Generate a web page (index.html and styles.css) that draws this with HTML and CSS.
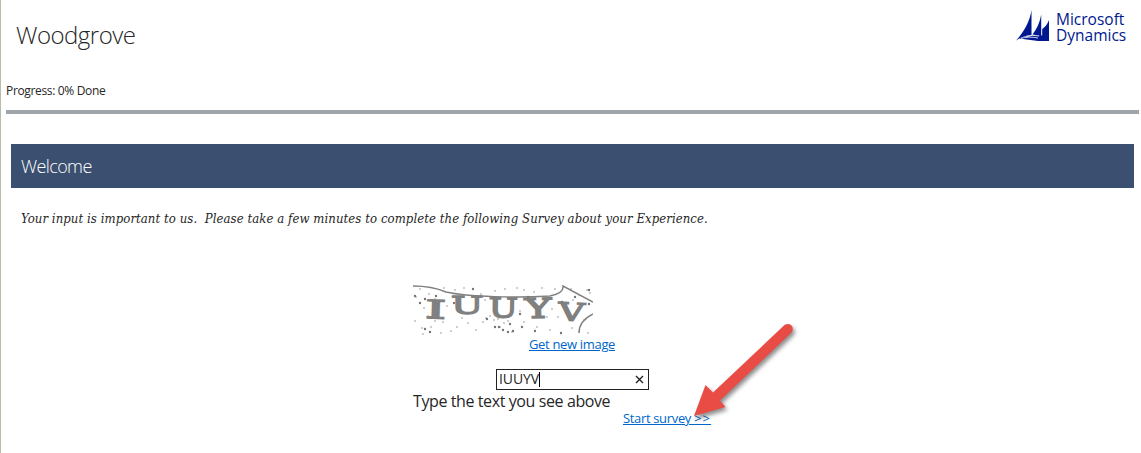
FILE: index.html
```html
<!DOCTYPE html>
<html lang="en">
<head>
<meta charset="utf-8">
<title>Woodgrove Survey</title>
<link rel="stylesheet" href="styles.css">
</head>
<body>
<div class="page">
  <header class="header">
    <h1 class="brand">Woodgrove</h1>
    <div class="logo">
      <svg class="logo-mark" width="34" height="34" viewBox="0 0 34 34">
        <g fill="#00188f">
          <path d="M15.500 1C14 12 8 23 0 31.500Q7 26.500 15.500 26Z"/>
          <path d="M25.200 5.500C24 13 21 20 16.500 25.500L25.200 27Z"/>
          <path d="M33 11C31 16 29 18 26.200 20V31H33Z"/>
          <path d="M3 30Q12 25.500 24 26.500L33 26V32H22L7 30Z"/>
        </g>
        <path d="M5 29.500Q12 27 22 29M10 28Q16 25 23 27" fill="none" stroke="#fff" stroke-width=".8"/>
      </svg>
      <div class="logo-text"><div>Microsoft</div><div>Dynamics</div></div>
    </div>
  </header>
  <div class="progress">Progress: 0% Done</div>
  <div class="progress-bar"></div>
  <main>
    <h2 class="section-title">Welcome</h2>
    <p class="intro">Your input is important to us.&nbsp; Please take a few minutes to complete the following Survey about your Experience.</p>
    <div class="verify">
      <svg class="challenge" width="180" height="50" viewBox="0 0 180 50">
        <g class="challenge-text">
          <text transform="translate(12 33) rotate(2) scale(1.95 .94)">I</text>
          <text transform="translate(38 29) scale(1.42 .9)">U</text>
          <text transform="translate(75.500 32) rotate(1) scale(1.28 1)">U</text>
          <text transform="translate(112 33) rotate(-1) scale(1.48 1)">Y</text>
          <text transform="translate(145 35) rotate(3) scale(1.34 .92)">V</text>
        </g>
        <path class="scratch" d="M0 1Q19 1 33 7C55 12 105 13 137 11Q151 8 150 1L180 17M180 29Q166 36 166 48"/>
        <path class="specks" d="M3 12h0M7 4h0M11 23h0M16 9h0M22 14h0M31 3h0M42 5h0M51 3h0M60 4h0M68 9h0M82 6h0M92 4h0M104 3h0M111 5h0M121 7h0M129 3h0M142 4h0M158 4h0M166 10h0M174 5h0M177 8h0M168 21h0M160 15h0M147 17h0M139 24h0M134 32h0M145 32h0M119 20h0M107 26h0M111 37h0M124 42h0M137 45h0M148 48h0M159 43h0M171 35h0M175 48h0M95 36h0M99 47h0M87 42h0M91 38h0M81 35h0M77 31h0M70 37h0M63 45h0M55 38h0M49 33h0M44 42h0M38 46h0M30 37h0M22 36h0M18 42h0M9 43h0M10 49h0M2 36h0M28 48h0M65 20h0M72 15h0M34 21h0M15 31h0M73 33h0M85 34h0"/>
        <path class="blots" d="M2 11h0M12 14h0M7 18h0M23 11h0M12 44h0M17 47h0M41 18h0M60 4h0M74 34h0M82 42h0M86 42h0M90 45h0M97 39h0M95 47h0M100 46h0M109 42h0M107 29h0M115 12h0M122 46h0M149 17h0M162 12h0M176 19h0M176 5h0M148 48h0"/>
      </svg>
      <a class="link new-image" href="#">Get new image</a>
      <label class="answer"><span class="answer-text">IUUYV</span><span class="caret"></span>
        <svg class="clear" width="9" height="9" viewBox="0 0 9 9"><path d="M1 1l7 7M8 1l-7 7"/></svg>
      </label>
      <div class="hint">Type the text you see above</div>
      <a class="link start" href="#">Start survey <span class="chevrons">&gt;&gt;</span></a>
    </div>
  </main>
  <svg class="pointer" width="120" height="120" viewBox="0 0 120 120">
    <path fill="#e94b45" d="M14 106L25.500 75L33 82.500L104.500 15Q109 12.500 112 16Q114 20 111 23L40 90.500L45.500 97Z"/>
  </svg>
</div>
</body>
</html>
```
FILE: styles.css
```css
* { box-sizing: border-box; }
body { margin: 0; background: #fff; color: #262626; font-family: "Open Sans", "Noto Sans", sans-serif; }
.page { position: relative; height: 453px; overflow: hidden; border-left: 1px solid #b7bda7; white-space: nowrap; }
.header { display: flex; justify-content: space-between; height: 82px; padding: 9px 13px 0 15px; }
.brand { margin: 9px 0 0; font-size: 24px; line-height: 34px; font-weight: 300; letter-spacing: -.5px; }
.logo { display: flex; width: 112px; }
.logo-mark { flex: none; margin-right: 6px; }
.logo-text { padding-top: 2px; color: #00188f; font-size: 15.5px; line-height: 16px; letter-spacing: 0; }
.progress { height: 28px; padding-left: 5px; font-size: 12px; line-height: 18px; letter-spacing: -.34px; }
.progress-bar { height: 4px; margin: 0 2px 0 5px; background: #a0a5aa; }
.section-title { height: 44px; margin: 30px 7px 0 10px; padding-left: 10px; background: #3b5071; color: #fff; font-size: 18px; line-height: 45px; font-weight: 300; letter-spacing: -.6px; }
.intro { height: 40px; margin: 20px 0 0 20px; font: italic 13px/22px "DejaVu Serif Condensed", "DejaVu Serif", serif; letter-spacing: .078px; }
.verify { display: flex; flex-direction: column; align-items: flex-start; width: 310px; margin: 37px 0 0 412px; }
.challenge { display: block; overflow: hidden; }
.challenge-text { font: 27px "DejaVu Serif", serif; fill: #808080; stroke: #808080; stroke-width: 1.5; }
.scratch { fill: none; stroke: #808080; stroke-width: 1.5; }
.specks, .blots { stroke: #909090; stroke-width: 1.6; stroke-linecap: round; }
.blots { stroke: #777; stroke-width: 2.4; }
.link { color: #0066cc; font-size: 13px; line-height: 18px; text-decoration: underline; }
.new-image { margin-left: 116px; letter-spacing: -.33px; }
.answer { display: flex; align-items: center; width: 153px; height: 21px; margin: 16px 0 0 83px; padding: 0 4px 0 2px; border: 1px solid #222; font-size: 14px; line-height: 18px; }
.answer-text { position: relative; top: -1px; letter-spacing: -.1px; }
.caret { width: 1px; height: 15px; background: #000; }
.clear { margin-left: auto; fill: none; stroke: #222; stroke-width: 1.4; }
.hint { height: 19px; font-size: 16px; line-height: 23px; letter-spacing: -.4px; }
.start { margin-left: 210px; letter-spacing: -.34px; }
.chevrons { letter-spacing: 1.1px; }
.pointer { position: absolute; left: 679px; top: 310px; filter: drop-shadow(2px 3px 2px rgba(0, 0, 0, .45)); }
```
